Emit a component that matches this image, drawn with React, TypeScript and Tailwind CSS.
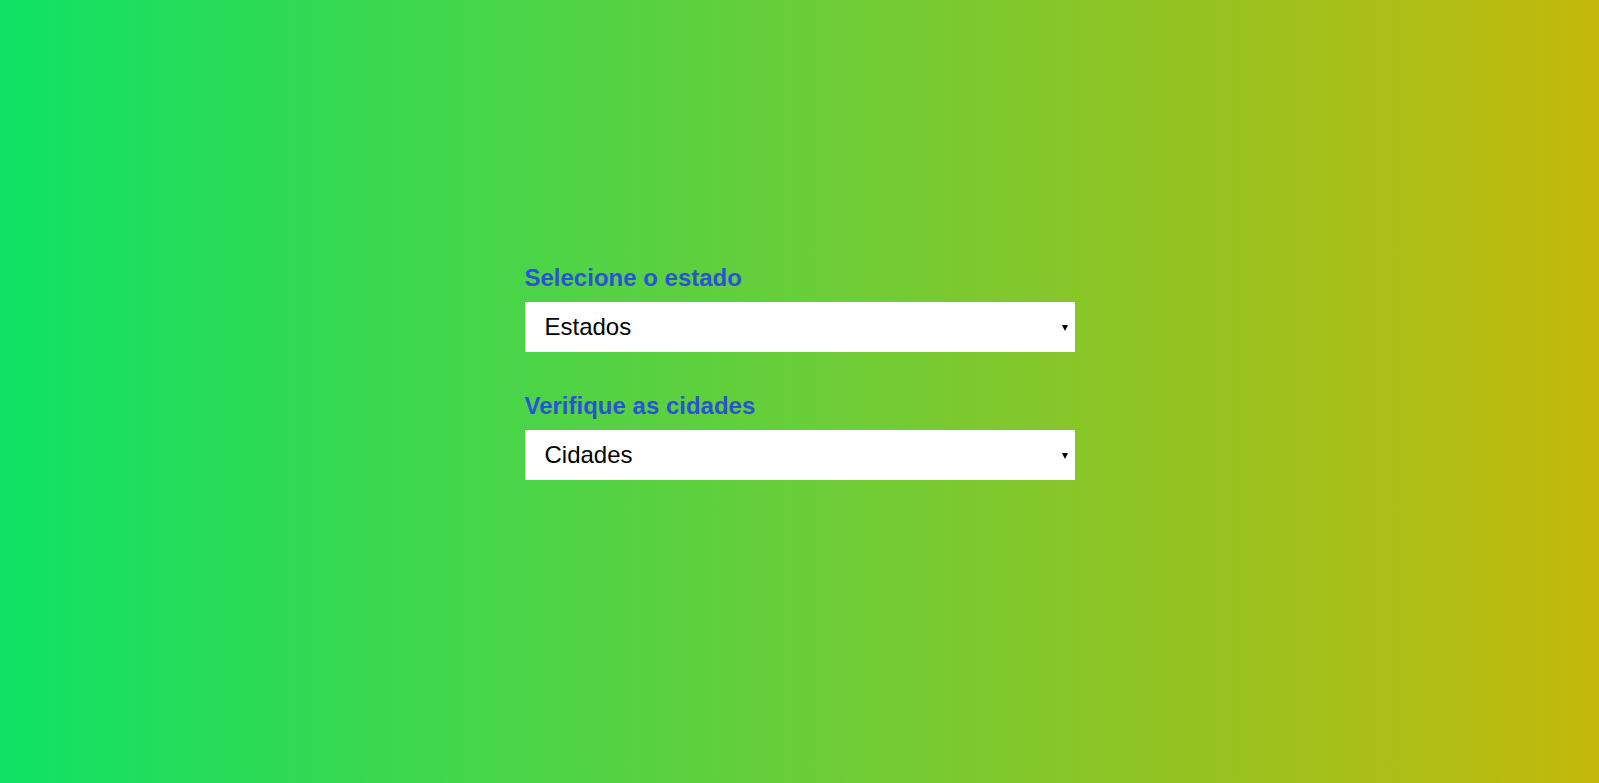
import React, { useState } from "react";

type FieldProps = {
  label: string;
  placeholder: string;
  value: string;
  options: string[];
  onChange: (v: string) => void;
};

const SelectField = ({ label, placeholder, value, options, onChange }: FieldProps) => {
  return (
    <div className="flex flex-col">
      <label className="text-[24px] leading-[28px] font-bold text-[#2a52d9] mb-[10px]">
        {label}
      </label>
      <div className="relative w-[550px] h-[50px]">
        <select
          value={value}
          onChange={(e) => onChange(e.target.value)}
          className="appearance-none w-full h-full bg-white text-black text-[24px] pl-[20px] pr-8 outline-none border-0 rounded-none"
        >
          <option value="">{placeholder}</option>
          {options.map((o) => (
            <option key={o} value={o}>
              {o}
            </option>
          ))}
        </select>
        {/* arrow */}
        <span className="pointer-events-none absolute right-[7px] top-[23px] w-0 h-0 border-l-[3px] border-r-[3px] border-t-[6px] border-l-transparent border-r-transparent border-t-black" />
      </div>
    </div>
  );
};

const App = () => {
  const [estado, setEstado] = useState("");
  const [cidade, setCidade] = useState("");

  return (
    <div
      className="w-full h-[783px] flex flex-col items-center pt-[264px] gap-[40px] bg-[linear-gradient(to_right,#0fe265,#c3b90b)]"
      style={{ fontFamily: '"Liberation Sans", Arial, sans-serif' }}
    >
      <SelectField
        label="Selecione o estado"
        placeholder="Estados"
        value={estado}
        options={["SP", "RJ", "MG"]}
        onChange={setEstado}
      />
      <SelectField
        label="Verifique as cidades"
        placeholder="Cidades"
        value={cidade}
        options={[]}
        onChange={setCidade}
      />
    </div>
  );
};

export default App;
